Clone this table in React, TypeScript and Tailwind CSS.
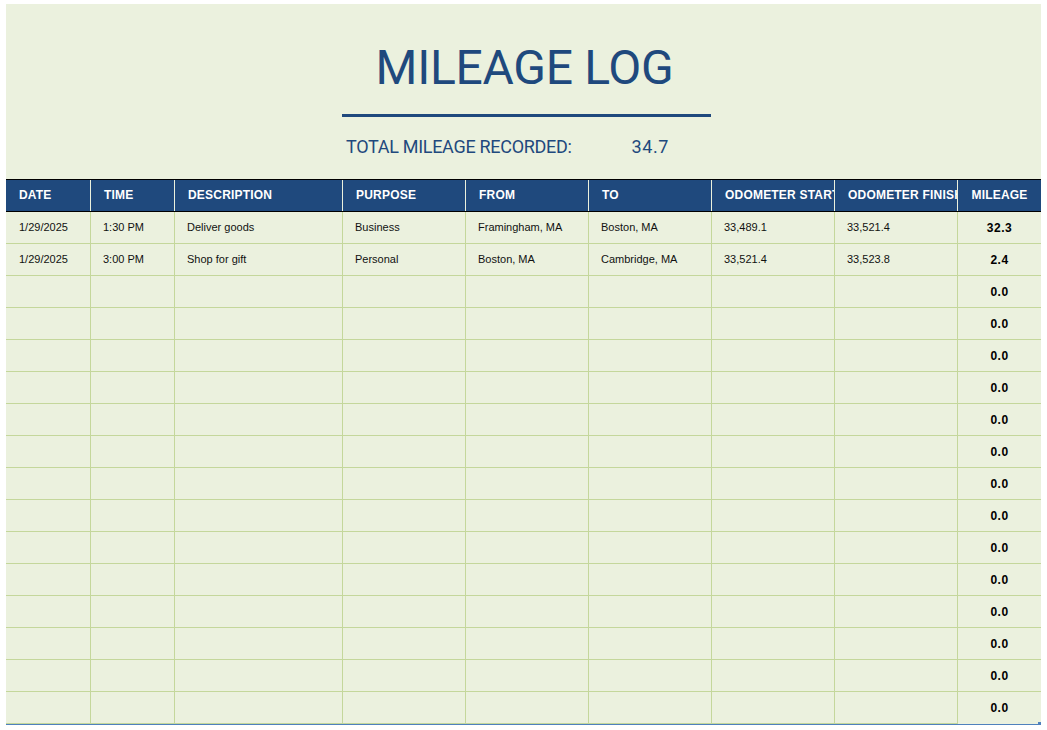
import React from 'react';

interface Trip {
  date: string;
  time: string;
  description: string;
  purpose: string;
  from: string;
  to: string;
  start: string;
  finish: string;
  mileage: string;
}

const trips: Trip[] = [
  { date: '1/29/2025', time: '1:30 PM', description: 'Deliver goods', purpose: 'Business', from: 'Framingham, MA', to: 'Boston, MA', start: '33,489.1', finish: '33,521.4', mileage: '32.3' },
  { date: '1/29/2025', time: '3:00 PM', description: 'Shop for gift', purpose: 'Personal', from: 'Boston, MA', to: 'Cambridge, MA', start: '33,521.4', finish: '33,523.8', mileage: '2.4' },
];

const headers = ['DATE', 'TIME', 'DESCRIPTION', 'PURPOSE', 'FROM', 'TO', 'ODOMETER START', 'ODOMETER FINISH'];

const EMPTY_ROWS = 14;

const gridCols = 'grid grid-cols-[85px_84px_168px_123px_123px_123px_123px_123px_83px]';

const App: React.FC = () => {
  const rows: (Trip | null)[] = [...trips, ...Array.from({ length: EMPTY_ROWS }, () => null)];

  return (
    <div className="min-h-[730px] bg-white pt-[4px] pl-[6px] font-['Liberation_Sans',Arial,sans-serif]">
      <div className="w-[1035px] bg-[#ebf1de]">
        {/* title block */}
        <div className="h-[175px] flex flex-col items-center">
          <h1 className="mt-[35px] ml-[2px] text-[48px] leading-[58px] tracking-[-0.3px] text-[#1f497d] font-['Roboto',sans-serif] font-normal">
            MILEAGE LOG
          </h1>
          <div className="mt-[17px] ml-[6px] w-[369px] h-[3px] bg-[#1f497d]" />
          <div className="mt-[19px] ml-[6px] w-[369px] flex text-[18px] leading-[22px] text-[#1f497d] font-['Roboto',sans-serif] tracking-[-0.3px]">
            <span className="pl-[4px]">TOTAL MILEAGE RECORDED:</span>
            <span className="ml-[60px] tracking-[0.6px]">34.7</span>
          </div>
        </div>

        {/* table */}
        <div className="border-b border-[#4f81bd] relative">
          <div className={`${gridCols} bg-[#1f497d] border-y border-black h-[33px]`}>
            {headers.map((h) => (
              <div
                key={h}
                className="border-r border-[#ebf1de] pl-[13px] pb-[1px] flex items-center overflow-hidden whitespace-nowrap text-white text-[12px] font-bold tracking-[0.2px]"
              >
                {h}
              </div>
            ))}
            <div className="flex items-center justify-center pb-[1px] text-white text-[12px] font-bold tracking-[0.2px]">MILEAGE</div>
          </div>

          {rows.map((r, i) => (
            <div key={i} className={`${gridCols} h-[32px] text-[11px] text-[#111]`}>
              <div className="border-r border-b border-[#c4d79b] pl-[13px] flex items-center">{r?.date}</div>
              <div className="border-r border-b border-[#c4d79b] pl-[12px] flex items-center">{r?.time}</div>
              <div className="border-r border-b border-[#c4d79b] pl-[12px] flex items-center">{r?.description}</div>
              <div className="border-r border-b border-[#c4d79b] pl-[12px] flex items-center">{r?.purpose}</div>
              <div className="border-r border-b border-[#c4d79b] pl-[12px] flex items-center">{r?.from}</div>
              <div className="border-r border-b border-[#c4d79b] pl-[12px] flex items-center">{r?.to}</div>
              <div className="border-r border-b border-[#c4d79b] pl-[12px] flex items-center">{r?.start}</div>
              <div className="border-r border-b border-[#c4d79b] pl-[12px] flex items-center">{r?.finish}</div>
              <div className={`${i === rows.length - 1 ? '' : 'border-b'} border-[#c4d79b] flex items-center justify-center text-[12px] font-bold tracking-[0.5px] text-black`}>
                {r ? r.mileage : '0.0'}
              </div>
            </div>
          ))}
          <div className="absolute right-0 bottom-[-1px] w-[3px] h-[3px] bg-[#4f81bd]" />
        </div>
      </div>
    </div>
  );
};

export default App;
